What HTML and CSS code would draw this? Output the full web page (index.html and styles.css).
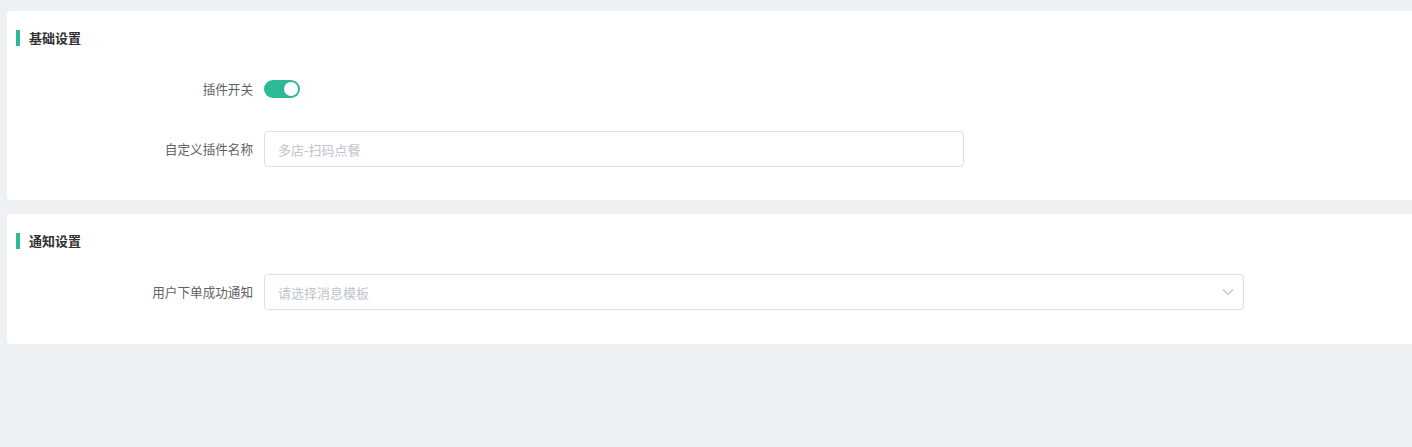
FILE: index.html
```html
<!DOCTYPE html>
<html lang="zh-CN">
<head>
<meta charset="utf-8">
<title>插件设置</title>
<link rel="stylesheet" href="styles.css">
</head>
<body>
<div class="page">
  <section class="card">
    <h2 class="card-title">基础设置</h2>
    <div class="form-item">
      <label class="form-label">插件开关</label>
      <div class="form-control">
        <span class="switch is-on"><span class="switch-knob"></span></span>
      </div>
    </div>
    <div class="form-item">
      <label class="form-label">自定义插件名称</label>
      <div class="form-control">
        <input class="input input-name" type="text" placeholder="多店-扫码点餐">
      </div>
    </div>
  </section>
  <section class="card card-notify">
    <h2 class="card-title">通知设置</h2>
    <div class="form-item">
      <label class="form-label">用户下单成功通知</label>
      <div class="form-control">
        <div class="select">
          <span class="select-placeholder">请选择消息模板</span>
          <svg class="select-arrow" width="12" height="8" viewBox="0 0 12 8"><path d="M1 1.5 L6 6.5 L11 1.5" fill="none" stroke="#c0c4cc" stroke-width="1.2"/></svg>
        </div>
      </div>
    </div>
  </section>
</div>
</body>
</html>
```
FILE: styles.css
```css
html, body {
  margin: 0;
  padding: 0;
}
body {
  background: #eef1f4;
  font-family: "Noto Sans CJK SC", "Noto Sans", sans-serif;
  font-size: 13px;
  color: #606266;
  width: 1412px;
  height: 447px;
  overflow: hidden;
}
.page {
  padding: 11px 0 0 7px;
  display: flex;
  flex-direction: column;
  gap: 14px;
}
.card {
  background: #fff;
  border-radius: 4px 0 0 4px;
  padding: 19px 0 33px 0;
}
.card-notify {
  padding-bottom: 34px;
}
.card-title {
  margin: 0 0 25px 9px;
  height: 16px;
  line-height: 16px;
  font-size: 13px;
  font-weight: bold;
  color: #303133;
  border-left: 4px solid #2bb996;
  padding-left: 9px;
}
.form-item {
  display: flex;
  align-items: center;
  height: 36px;
}
.form-item + .form-item {
  margin-top: 24px;
}
.form-label {
  width: 246px;
  padding-right: 11px;
  text-align: right;
  color: #606266;
  font-size: 12.6px;
  line-height: 36px;
}
.form-control {
  display: flex;
  align-items: center;
  height: 36px;
}
.switch {
  display: inline-block;
  position: relative;
  width: 36px;
  height: 18px;
  border-radius: 9px;
  background: #dcdfe6;
}
.switch.is-on {
  background: #2bb996;
}
.switch-knob {
  position: absolute;
  top: 2px;
  left: 2px;
  width: 14px;
  height: 14px;
  border-radius: 50%;
  background: #fff;
}
.switch.is-on .switch-knob {
  left: 20px;
}
.input {
  box-sizing: border-box;
  height: 36px;
  border: 1px solid #dcdfe6;
  border-radius: 4px;
  padding: 0 13px;
  font-family: inherit;
  font-size: 13px;
  color: #606266;
  outline: none;
  background: #fff;
}
.input::placeholder {
  color: #c0c4cc;
}
.input-name {
  width: 700px;
}
.select {
  box-sizing: border-box;
  width: 980px;
  height: 36px;
  border: 1px solid #dcdfe6;
  border-radius: 4px;
  padding: 0 9px 0 13px;
  display: flex;
  align-items: center;
  justify-content: space-between;
}
.select-placeholder {
  color: #c0c4cc;
  font-size: 13px;
}
.select-arrow {
  display: block;
}
```
